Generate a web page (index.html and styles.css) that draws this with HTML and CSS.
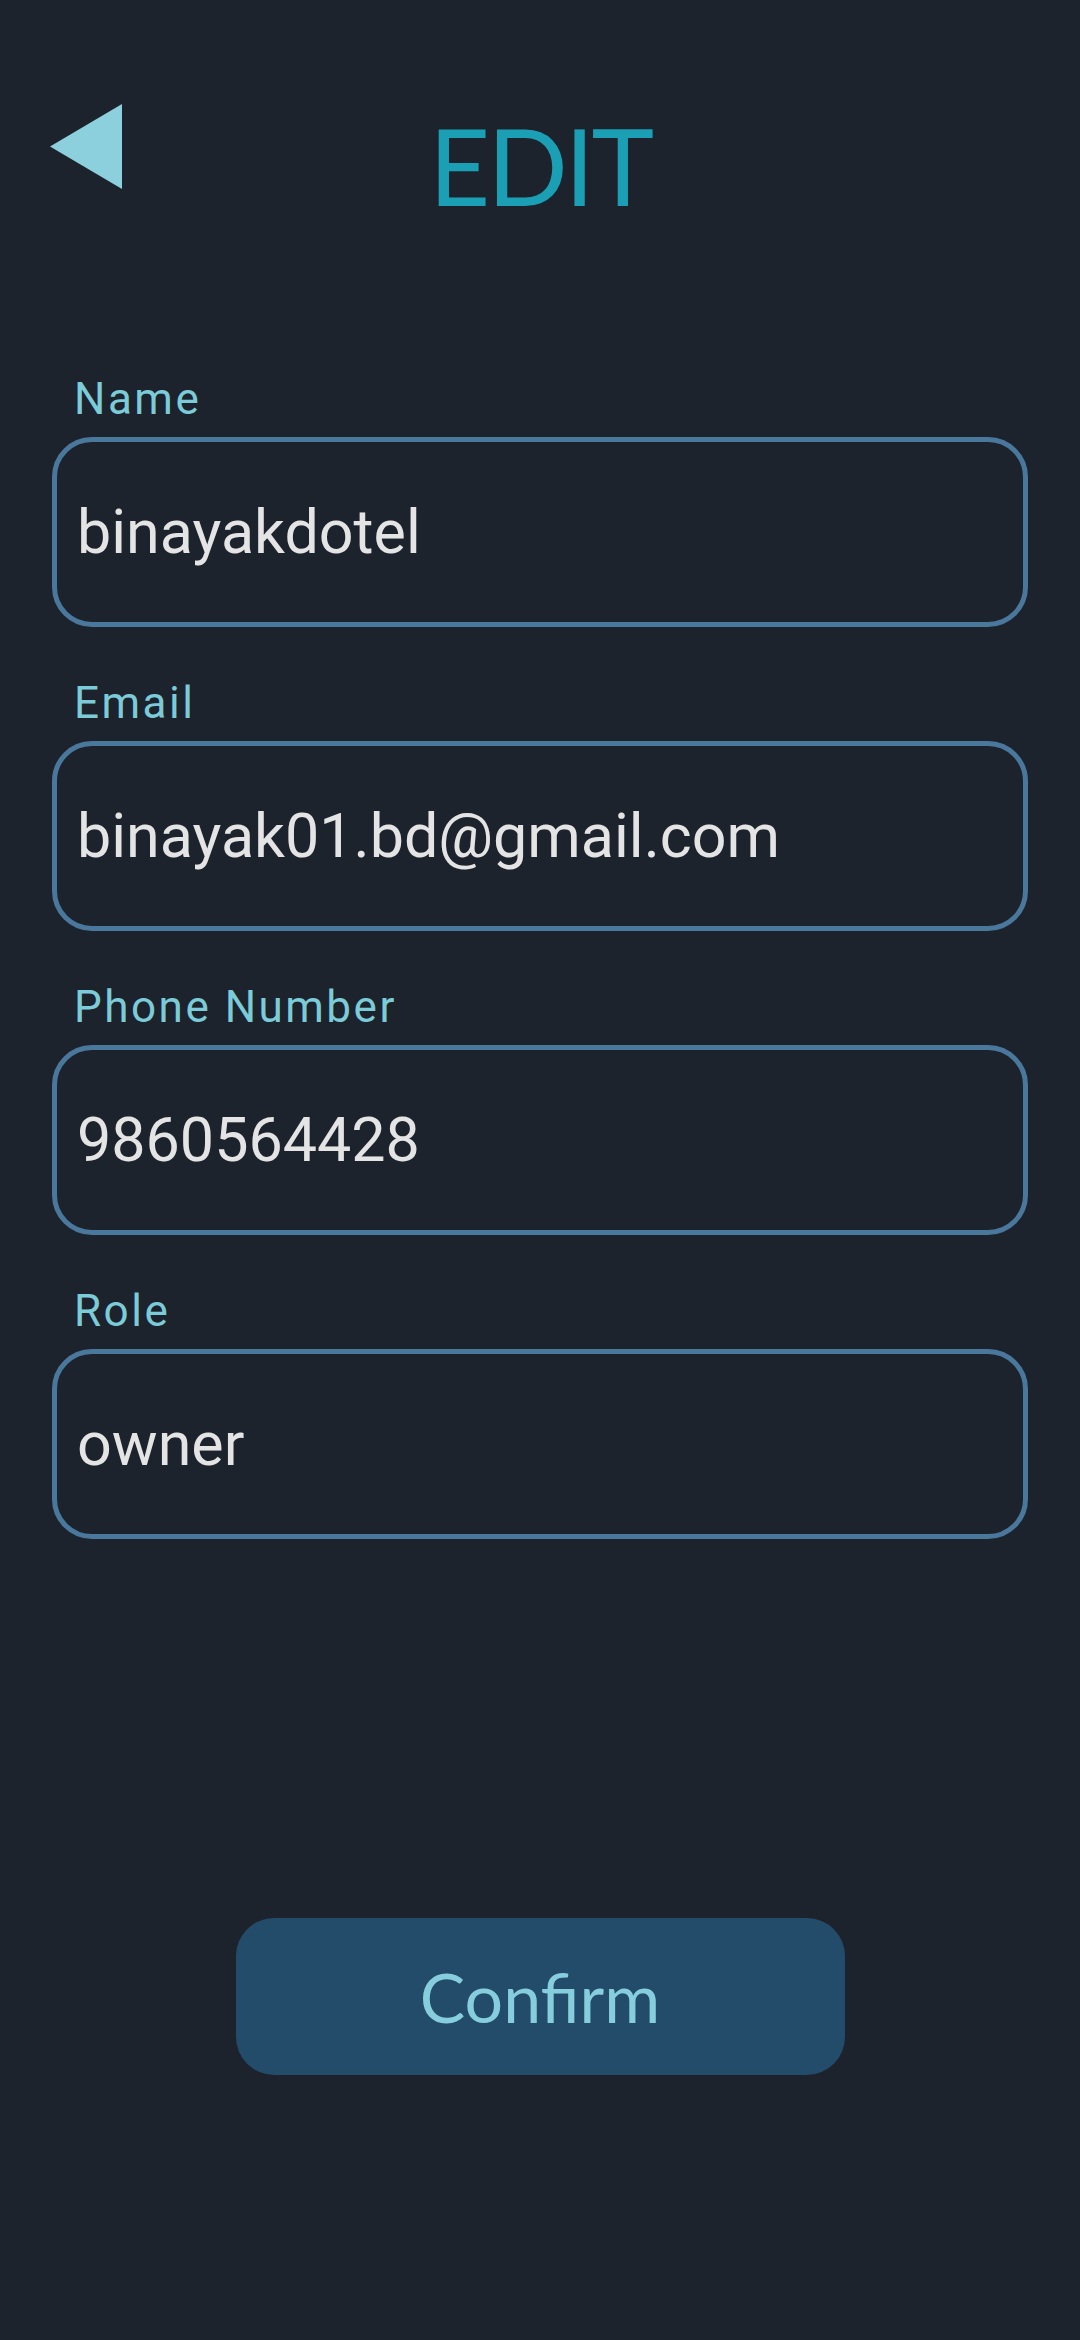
FILE: index.html
```html
<!DOCTYPE html>
<html lang="en">
<head>
<meta charset="utf-8">
<title>Edit</title>
<link rel="stylesheet" href="styles.css">
</head>
<body>
<div class="screen">
  <header class="header">
    <button class="back" aria-label="Back">
      <svg width="72" height="85" viewBox="0 0 72 85"><polygon points="0,42.5 72,0 72,85" fill="#8dd0dd"/></svg>
    </button>
    <h1 class="title">EDIT</h1>
    <div></div>
  </header>

  <form class="form">
    <div class="field">
      <label class="label">Name</label>
      <div class="input">binayakdotel</div>
    </div>
    <div class="field">
      <label class="label">Email</label>
      <div class="input">binayak01.bd@gmail.com</div>
    </div>
    <div class="field">
      <label class="label">Phone Number</label>
      <div class="input">9860564428</div>
    </div>
    <div class="field">
      <label class="label">Role</label>
      <div class="input">owner</div>
    </div>
  </form>

  <div class="actions">
    <button class="confirm" type="button">Confirm</button>
  </div>
</div>
</body>
</html>
```

FILE: styles.css
```css
html, body {
  margin: 0;
  padding: 0;
  background: #1d232c;
}

.screen {
  width: 1080px;
  height: 2340px;
  background: #1d232c;
  display: flex;
  flex-direction: column;
}

.header {
  display: grid;
  grid-template-columns: 1fr auto 1fr;
  align-items: start;
  padding-top: 104px;
}

.back {
  justify-self: start;
  margin-left: 50px;
  padding: 0;
  border: 0;
  background: none;
  display: block;
  line-height: 0;
}

.title {
  margin: 1px 0 0 0;
  font-family: Lato, "Liberation Sans", sans-serif;
  font-weight: 400;
  font-size: 106px;
  line-height: 120px;
  color: #1a9fb5;
  letter-spacing: -3px;
}

.form {
  display: flex;
  flex-direction: column;
  gap: 50px;
  margin: 148px 52px 0 52px;
}

.field {
  display: flex;
  flex-direction: column;
  gap: 12px;
}

.label {
  margin-left: 22px;
  font-family: Roboto, "Liberation Sans", sans-serif;
  font-size: 44px;
  line-height: 52px;
  letter-spacing: 2.5px;
  color: #7ccbd8;
}

.input {
  box-sizing: border-box;
  height: 190px;
  border: 5px solid #4a789d;
  border-radius: 40px;
  padding-left: 20px;
  display: flex;
  align-items: center;
  font-family: Roboto, "Liberation Sans", sans-serif;
  font-size: 61px;
  color: #e4e4e4;
}

.actions {
  display: flex;
  justify-content: center;
  margin-top: 379px;
}

.confirm {
  width: 609px;
  height: 157px;
  border: 0;
  border-radius: 38px;
  background: #234c6a;
  color: #86cede;
  font-family: Lato, "Liberation Sans", sans-serif;
  font-size: 68px;
  padding: 0;
}
```
